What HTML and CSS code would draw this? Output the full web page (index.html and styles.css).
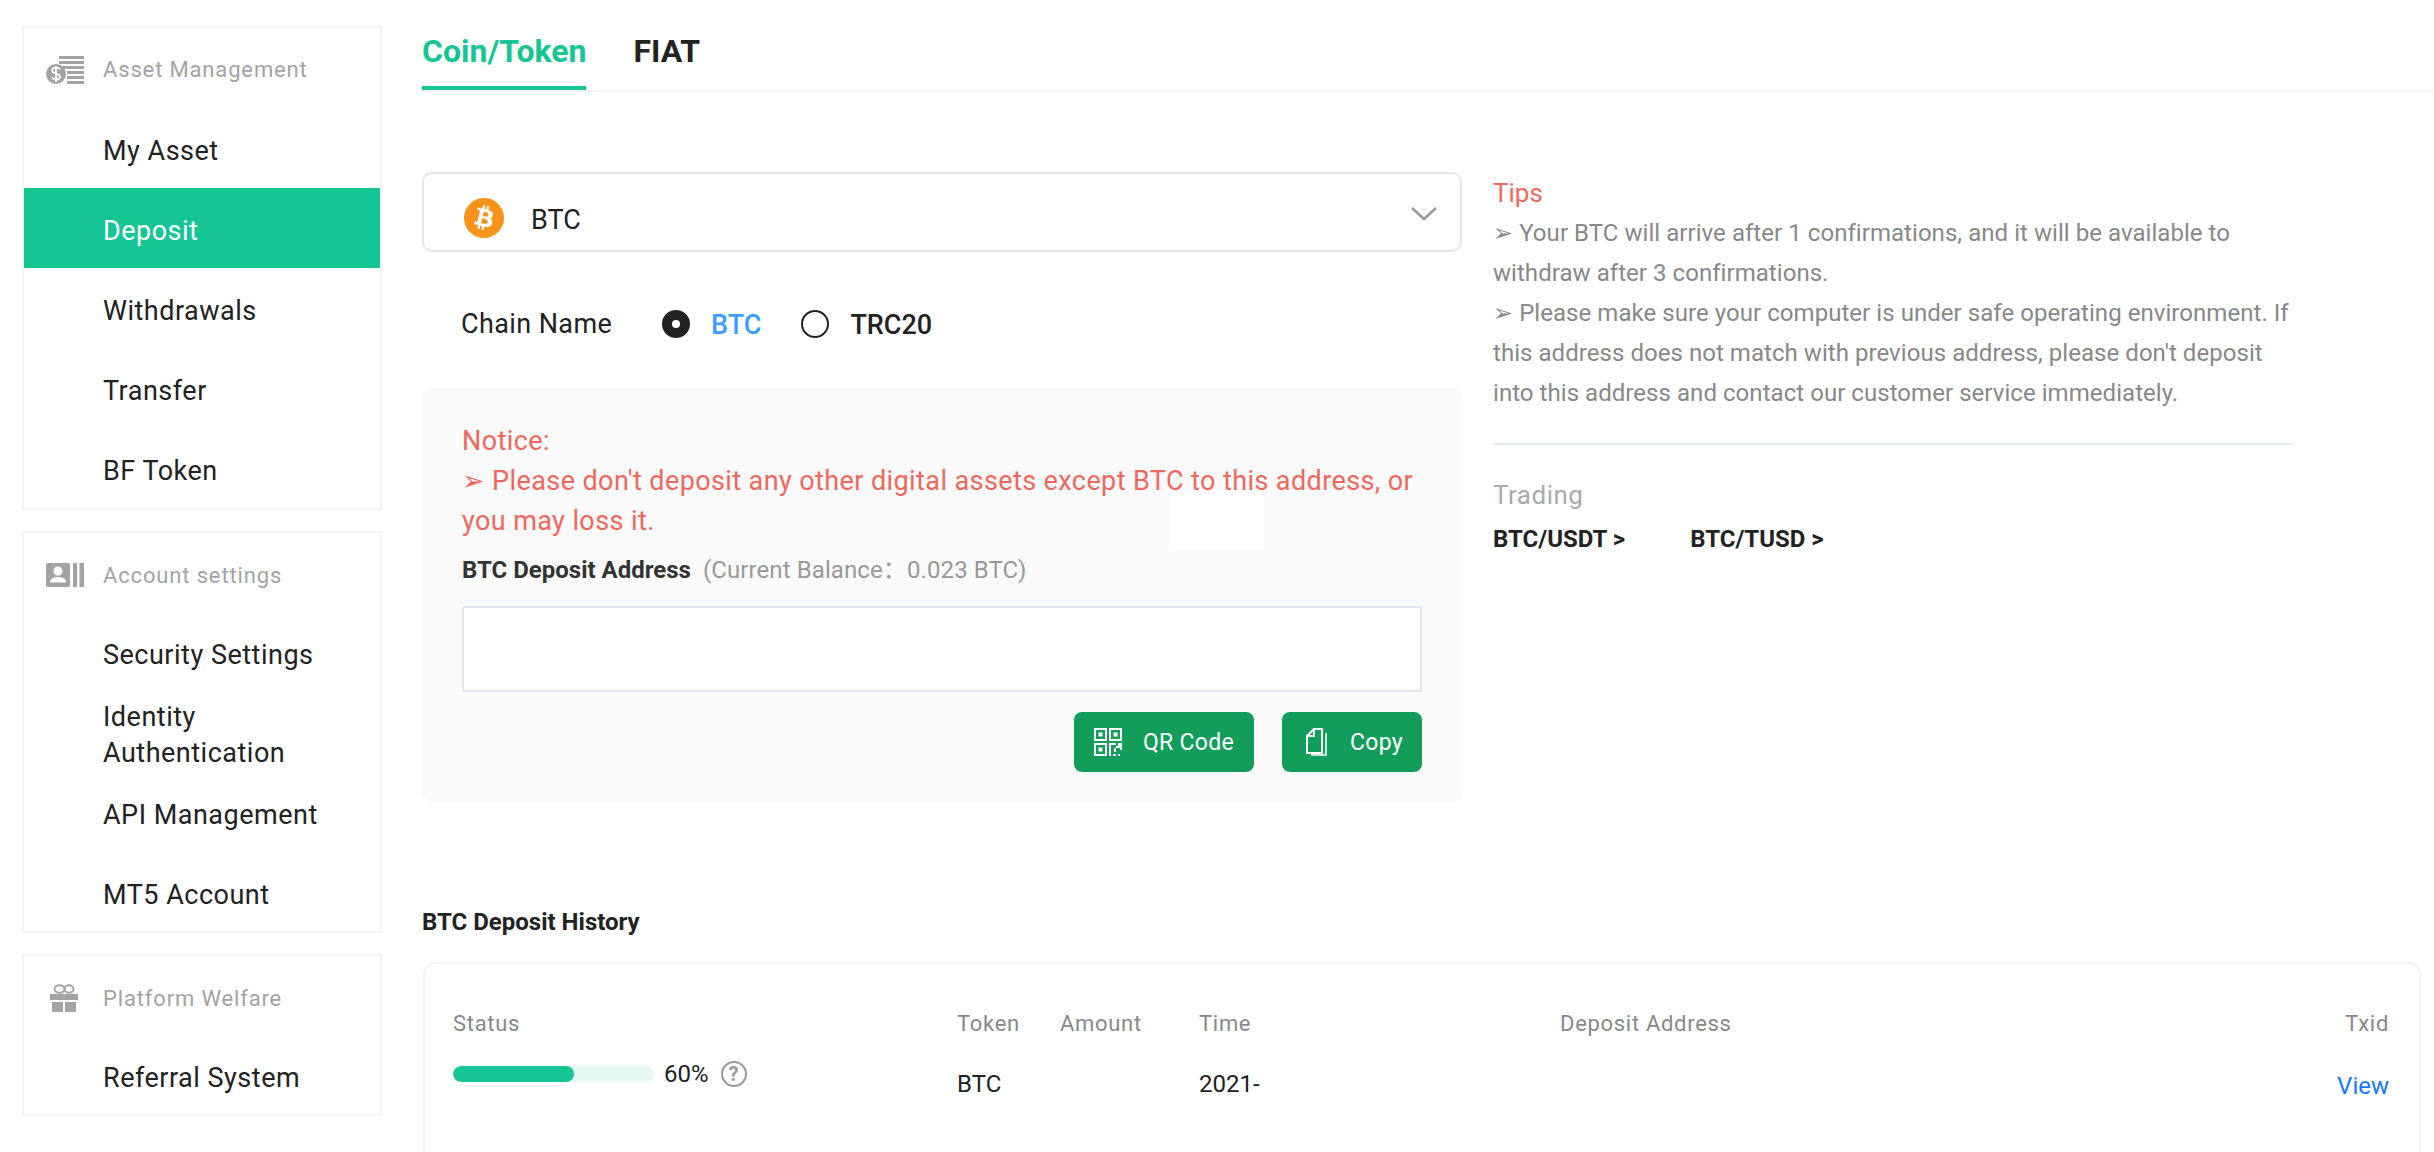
FILE: index.html
```html
<!DOCTYPE html>
<html lang="en">
<head>
  <meta charset="UTF-8" />
  <title>Deposit</title>
  <link rel="stylesheet" href="styles.css">
</head>
<body>
  <aside class="sidebar">
    <div class="menu-card">
      <div class="menu-title">
        <svg class="menu-icon" viewBox="0 0 38 28" fill="#a3a3a3">
          <path d="M13 0h25v3H13zM13 5h25v3H13zM13 10h25v3H13zM21 15h17v3H21zM21 20h17v3H21zM21 25h17v3H21z"/>
          <circle cx="10" cy="18" r="10"/>
          <path d="M14 13.500c-1-1.400-2.500-1.800-4-1.800-2.200 0-3.800 1.200-3.800 3 0 3.800 7.800 2 7.800 5.900 0 1.800-1.700 3-3.900 3-1.700 0-3.300-.7-4.300-2.100M10 10v16" fill="none" stroke="#fff" stroke-width="1.800"/>
        </svg>
        <span>Asset Management</span>
      </div>
      <a class="menu-item">My Asset</a>
      <a class="menu-item active">Deposit</a>
      <a class="menu-item">Withdrawals</a>
      <a class="menu-item">Transfer</a>
      <a class="menu-item">BF Token</a>
    </div>
    <div class="menu-card">
      <div class="menu-title">
        <svg class="menu-icon" viewBox="0 0 38 24" fill="#a3a3a3">
          <rect width="24" height="24" rx="2"/>
          <path d="M27 0h4v24h-4zM33.500 0H38v24h-4.500z"/>
          <circle cx="12" cy="8" r="4.500" fill="#fff"/>
          <path d="M4 19.500c0-4 3.500-5.500 8-5.500s8 1.500 8 5.500z" fill="#fff"/>
        </svg>
        <span>Account settings</span>
      </div>
      <a class="menu-item">Security Settings</a>
      <a class="menu-item">Identity<br>Authentication</a>
      <a class="menu-item">API Management</a>
      <a class="menu-item">MT5 Account</a>
    </div>
    <div class="menu-card">
      <div class="menu-title">
        <svg class="menu-icon" viewBox="0 0 38 28" fill="#a3a3a3">
          <path d="M4 10h28v6H4zM6 18h11v10H6zM19 18h11v10H19z"/>
          <ellipse cx="13.500" cy="5" rx="5" ry="3.700" fill="none" stroke="#a3a3a3" stroke-width="2"/>
          <ellipse cx="23" cy="5" rx="4.500" ry="3.700" fill="none" stroke="#a3a3a3" stroke-width="2"/>
        </svg>
        <span>Platform Welfare</span>
      </div>
      <a class="menu-item">Referral System</a>
    </div>
  </aside>

  <main class="content">
    <div class="tabs">
      <a class="tab active">Coin/Token</a>
      <a class="tab">FIAT</a>
    </div>

    <div class="deposit-row">
      <section class="deposit-form">
        <div class="coin-select">
          <svg class="coin-logo" viewBox="0 0 64 64">
            <path fill="#f7931a" d="M63.040 39.741c-4.274 17.143-21.638 27.575-38.783 23.301C7.120 58.768-3.313 41.404.962 24.262 5.234 7.117 22.597-3.317 39.737.957 56.882 5.230 67.313 22.596 63.040 39.741z"/>
            <path fill="#fff" d="M46.110 27.441c.637-4.258-2.605-6.547-7.038-8.074l1.438-5.768-3.511-.875-1.400 5.616c-.923-.23-1.871-.447-2.813-.662l1.410-5.653-3.509-.875-1.439 5.766c-.764-.174-1.514-.346-2.242-.527l.004-.018-4.842-1.209-.934 3.750s2.605.597 2.550.634c1.422.355 1.679 1.296 1.636 2.042l-1.638 6.571c.098.025.225.061.365.117-.117-.029-.242-.061-.371-.092l-2.296 9.205c-.174.432-.615 1.080-1.609.834.035.051-2.552-.637-2.552-.637l-1.743 4.019 4.569 1.139c.85.213 1.683.436 2.503.646l-1.453 5.834 3.507.875 1.439-5.772c.958.26 1.888.5 2.798.726l-1.434 5.745 3.511.875 1.453-5.823c5.987 1.133 10.489.676 12.384-4.739 1.527-4.360-.076-6.875-3.226-8.515 2.294-.529 4.027-2.056 4.128-5.583zM38.087 38.690c-1.085 4.360-8.426 2.003-10.806 1.412l1.928-7.729c2.380.593 10.013 1.770 8.878 6.317zM39.173 27.378c-.99 3.966-7.100 1.951-9.082 1.457l1.748-7.010c1.982.494 8.366 1.416 7.334 5.553z"/>
          </svg>
          <span class="coin-name">BTC</span>
          <svg class="chevron" viewBox="0 0 26 14"><path d="M1 1l12 11L25 1" fill="none" stroke="#999" stroke-width="2.500"/></svg>
        </div>

        <div class="chain-row">
          <span class="chain-label">Chain Name</span>
          <label class="radio checked"><i></i><span>BTC</span></label>
          <label class="radio"><i></i><span>TRC20</span></label>
        </div>

        <div class="notice-panel">
          <p class="notice">Notice:<br>➢ Please don't deposit any other digital assets except BTC to this address, or you may loss it.</p>
          <div class="patch"></div>
          <div class="address-label"><b>BTC Deposit Address</b><span>(Current Balance：0.023 BTC)</span></div>
          <div class="address-box"></div>
          <div class="actions">
            <button class="btn btn-qr">
              <svg viewBox="0 0 28 28" width="28" height="28" fill="#fff">
                <path fill-rule="evenodd" d="M0 0h13v13H0zM2 2v9h9V2zM4.500 4.500h4v4h-4zM15 0h13v13H15zM17 2v9h9V2zM19.500 4.500h4v4h-4zM0 15h13v13H0zM2 17v9h9V17zM4.500 19.500h4v4h-4zM15 15h7v2h-5v11h-2zM24 15h4v7h-2v-2h-4v-2h2zM20 20h2v4h-2zM19 26h3v2h-3zM24 26h2v2h-2z"/>
              </svg>
              <span>QR Code</span>
            </button>
            <button class="btn btn-copy">
              <svg viewBox="0 0 21 28" width="21" height="28" fill="none" stroke="#fff" stroke-width="2">
                <path d="M8 1h8v24H1V8z"/>
                <path d="M8 1v7H1"/>
                <path d="M20 5v22H5" stroke-width="1.500"/>
              </svg>
              <span>Copy</span>
            </button>
          </div>
        </div>
      </section>

      <section class="tips">
        <h3>Tips</h3>
        <p>➢ Your BTC will arrive after 1 confirmations, and it will be available to withdraw after 3 confirmations.</p>
        <p>➢ Please make sure your computer is under safe operating environment. If this address does not match with previous address, please don't deposit into this address and contact our customer service immediately.</p>
        <div class="tips-line"></div>
        <h4>Trading</h4>
        <div class="pairs">
          <a>BTC/USDT &gt;</a>
          <a>BTC/TUSD &gt;</a>
        </div>
      </section>
    </div>

    <h2 class="history-title">BTC Deposit History</h2>
    <div class="history-card">
      <table class="history">
        <colgroup>
          <col class="col-status"><col class="col-token"><col class="col-amount"><col class="col-time"><col><col class="col-txid">
        </colgroup>
        <thead>
          <tr><th>Status</th><th>Token</th><th>Amount</th><th>Time</th><th>Deposit Address</th><th class="right">Txid</th></tr>
        </thead>
        <tbody>
          <tr>
            <td class="status-cell">
              <div class="status">
                <div class="bar"><div class="bar-fill" style="width: 60%"></div></div>
                <span>60%</span>
                <span class="help">?</span>
              </div>
            </td>
            <td>BTC</td>
            <td></td>
            <td>2021-</td>
            <td></td>
            <td class="right view-cell"><a>View</a></td>
          </tr>
        </tbody>
      </table>
    </div>
  </main>
</body>
</html>
```

FILE: styles.css
```css
* { box-sizing: border-box; }
html, body { height: 100%; overflow: hidden; }
body {
  margin: 0; background: #fff; color: #222;
  font-family: Roboto, "DejaVu Sans", "Noto Sans CJK SC", sans-serif;
  display: flex; align-items: flex-start;
}

/* sidebar */
.sidebar {
  width: 360px; margin: 26px 0 0 22px; flex: none;
  display: flex; flex-direction: column; gap: 21px;
}
.menu-card { border: 2px solid #f3f3f3; }
.menu-title {
  height: 81px; padding: 3px 0 0 22px; display: flex; align-items: center; gap: 19px;
  color: #a3a3a3; font-size: 22px; letter-spacing: .85px;
}
.menu-icon { width: 38px; flex: none; }
.menu-item {
  display: flex; align-items: center; height: 80px; padding: 2px 0 0 79px;
  font-size: 27px; line-height: 36px; letter-spacing: .5px; color: #222;
}
.menu-item.active { background: #15c594; color: #fff; }
.menu-card:first-child .menu-title { height: 80px; }
.menu-card:first-child .menu-item { padding-top: 6px; }
.menu-card:not(:first-child) .menu-item:last-child { margin-bottom: -3px; }

/* main */
.content { width: 2012px; margin-left: 40px; flex: none; }
.tabs {
  height: 92px; display: flex; gap: 47px; border-bottom: 2px solid #f3f3f3;
}
.tab {
  height: 90px; line-height: 102px; font-size: 32px; font-weight: 700; color: #222;
}
.tab.active { color: #15c594; border-bottom: 4px solid #15c594; }

.deposit-row { display: flex; gap: 31px; margin-top: 80px; }
.deposit-form { width: 1040px; flex: none; }

.coin-select {
  height: 80px; border: 2px solid #e6e6e6; border-radius: 10px;
  display: flex; align-items: center; padding: 12px 23px 0 40px;
}
.coin-logo { width: 40px; height: 40px; }
.coin-name { margin-left: 27px; font-size: 27px; flex: 1; padding-top: 4px; }
.chevron { width: 26px; height: 14px; margin-top: -8px; }

.chain-row {
  height: 40px; margin-top: 52px; padding-left: 39px;
  display: flex; align-items: center; font-size: 27px;
}
.chain-label { width: 201px; letter-spacing: .4px; }
.radio { display: flex; align-items: center; gap: 21px; margin-right: 40px; font-weight: 500; }
.radio span { padding-top: 2px; }
.radio i {
  width: 28px; height: 28px; border-radius: 50%; border: 2px solid #222;
  display: flex; align-items: center; justify-content: center;
}
.radio.checked i { background: #222; }
.radio.checked i::after { content: ""; width: 8px; height: 8px; border-radius: 50%; background: #fff; }
.radio.checked span { color: #3d9eff; }

.notice-panel {
  position: relative; margin-top: 44px; padding: 33px 40px 30px;
  background: #fafafa; border-radius: 10px;
}
.notice { margin: 0; font-size: 27px; line-height: 40px; color: #f0675c; letter-spacing: .4px; }
.patch { position: absolute; left: 748px; top: 104px; width: 94px; height: 58px; background: #fff; }
.address-label {
  height: 32px; margin-top: 13px; line-height: 32px; font-size: 24px;
  display: flex; gap: 12px; position: relative;
}
.address-label b { font-weight: 700; color: #333; }
.address-label span { color: #999; letter-spacing: .1px; }
.address-box { height: 86px; margin-top: 20px; background: #fff; border: 2px solid #e4e8ee; }
.actions { display: flex; justify-content: flex-end; gap: 28px; margin-top: 20px; }
.btn {
  height: 60px; border: none; border-radius: 8px; background: #129d5b; color: #fff;
  display: flex; align-items: center; font: inherit; font-size: 23px; letter-spacing: .3px;
}
.btn-qr { width: 180px; padding: 0 0 0 20px; gap: 21px; }
.btn-copy { width: 140px; padding: 0 0 0 24px; gap: 23px; }

.tips { width: 800px; margin-top: 1px; color: #888; font-size: 24px; line-height: 40px; }
.tips h3 { margin: 0; font-size: 26px; font-weight: 400; color: #f0675c; }
.tips p { margin: 0; letter-spacing: .05px; }
.tips-line { height: 2px; margin-top: 30px; background: #e6e8ef; }
.tips h4 { margin: 30px 0 0; font-size: 26px; font-weight: 400; letter-spacing: .5px; color: #aaa; }
.pairs { display: flex; gap: 65px; margin-top: 4px; font-size: 24px; font-weight: 700; color: #222; }

/* history */
.history-title { margin: 104px 0 0; font-size: 24px; line-height: 32px; font-weight: 700; color: #222; }
.history-card {
  margin: 24px 13px 0 1px; height: 190px; padding: 44px 30px 0 28px;
  border: 2px solid #f3f3f3; border-bottom: none; border-radius: 12px 12px 0 0;
}
.history { width: 100%; table-layout: fixed; border-collapse: collapse; font-size: 22px; line-height: 32px; }
.col-status { width: 504px; }
.col-token { width: 103px; }
.col-amount { width: 139px; }
.col-time { width: 361px; }
.col-txid { width: 120px; }
.history th, .history td { padding: 0; text-align: left; vertical-align: top; }
.history th { font-weight: 400; color: #888; letter-spacing: .7px; }
.history td { padding-top: 28px; color: #222; font-size: 24px; }
.history .right { text-align: right; }
.history td.status-cell { padding-top: 18px; }
.history td.view-cell { padding-top: 30px; }
.view-cell a { color: #1677ff; }
.status { display: flex; align-items: center; }
.bar { width: 201px; height: 16px; border-radius: 8px; background: #e6f8f3; overflow: hidden; }
.bar-fill { height: 100%; border-radius: 8px; background: #15c594; }
.status span { margin-left: 10px; }
.status .help {
  width: 26px; height: 26px; margin-left: 12px; border: 2px solid #999; border-radius: 50%;
  color: #999; font-size: 20px; font-weight: 700; line-height: 22px; text-align: center;
}
```
